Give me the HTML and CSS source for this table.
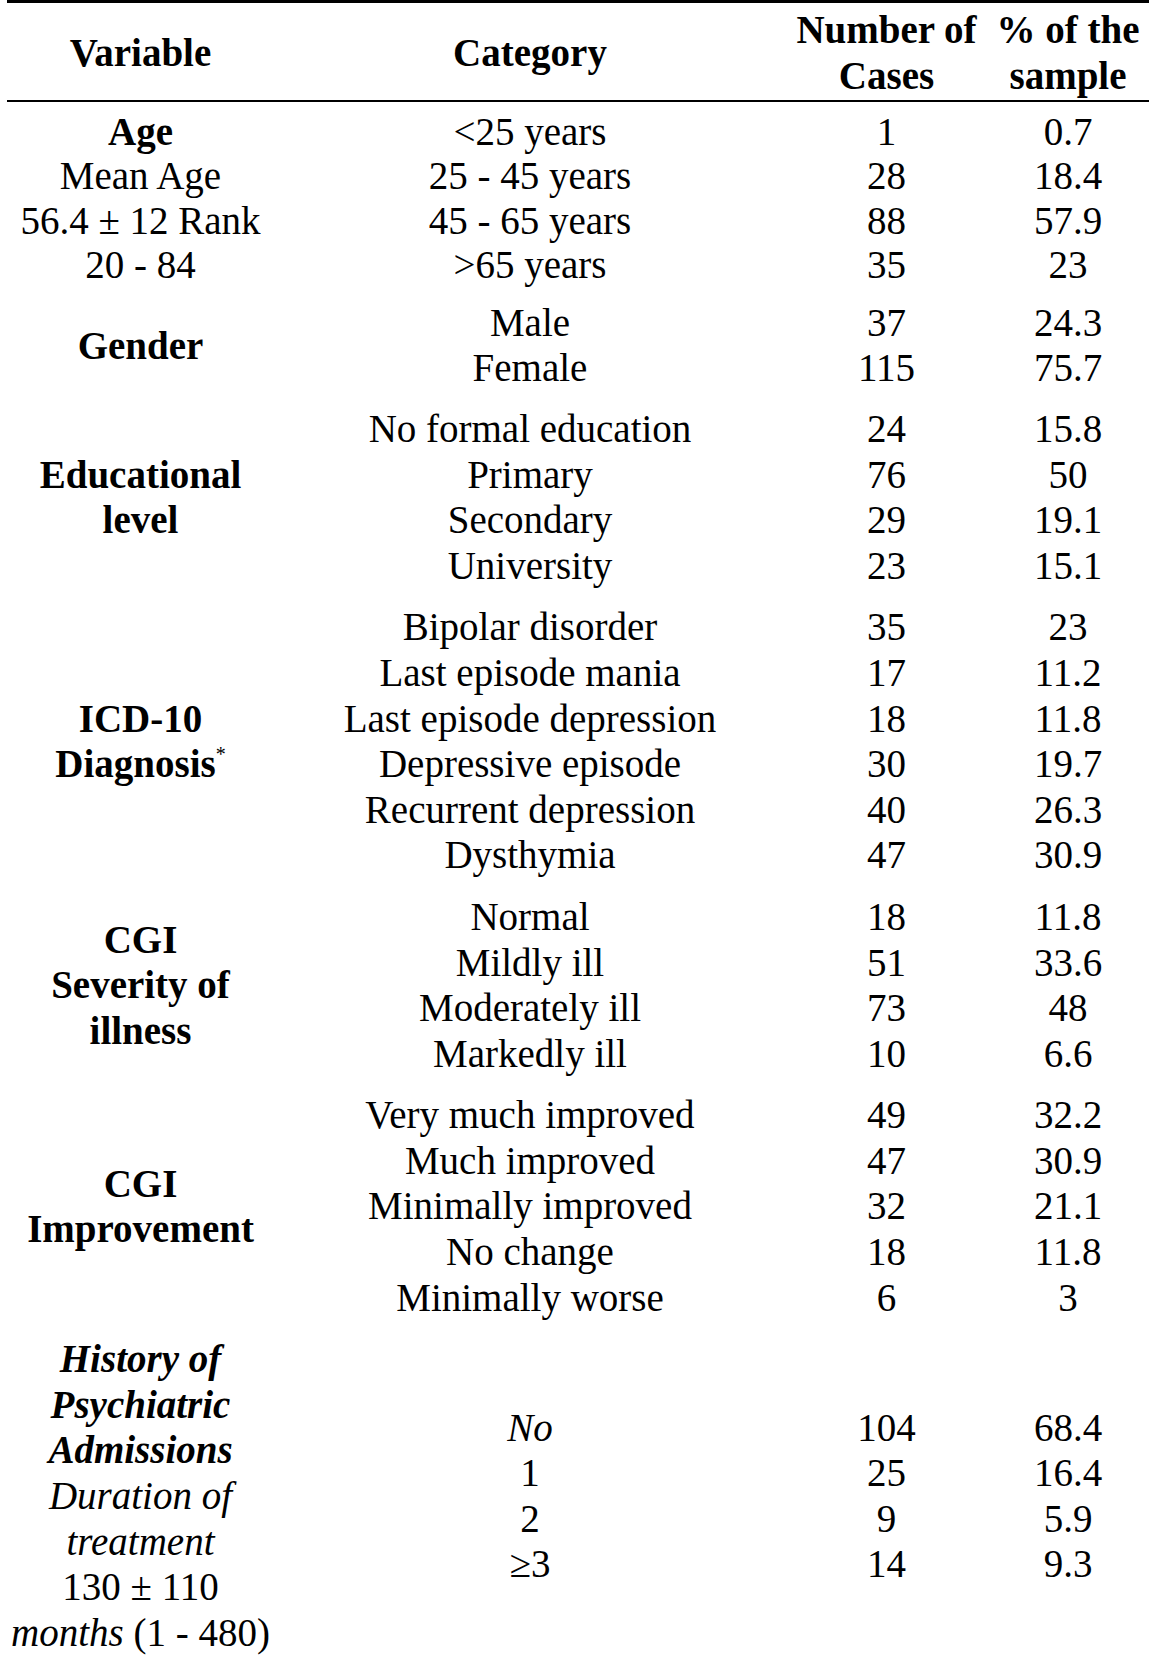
FILE: index.html
```html
<!DOCTYPE html>
<html lang="en">
<head>
<meta charset="utf-8">
<title>Sample characteristics</title>
<link rel="stylesheet" href="styles.css">
</head>
<body>
<table class="data">
  <colgroup>
    <col class="c-var">
    <col class="c-cat">
    <col class="c-num">
    <col class="c-pct">
  </colgroup>
  <thead>
    <tr>
      <th>Variable</th>
      <th>Category</th>
      <th>Number of<br>Cases</th>
      <th>% of the<br>sample</th>
    </tr>
  </thead>
  <tbody>
    <tr class="grp tight first">
      <td><b>Age</b><br>Mean Age<br>56.4 ± 12 Rank<br>20 - 84</td>
      <td>&lt;25 years<br>25 - 45 years<br>45 - 65 years<br>&gt;65 years</td>
      <td>1<br>28<br>88<br>35</td>
      <td>0.7<br>18.4<br>57.9<br>23</td>
    </tr>
    <tr class="grp tight">
      <td><b>Gender</b></td>
      <td>Male<br>Female</td>
      <td>37<br>115</td>
      <td>24.3<br>75.7</td>
    </tr>
    <tr class="grp">
      <td><b>Educational<br>level</b></td>
      <td>No formal education<br>Primary<br>Secondary<br>University</td>
      <td>24<br>76<br>29<br>23</td>
      <td>15.8<br>50<br>19.1<br>15.1</td>
    </tr>
    <tr class="grp">
      <td><b>ICD-10<br>Diagnosis<sup class="star">*</sup></b></td>
      <td>Bipolar disorder<br>Last episode mania<br>Last episode depression<br>Depressive episode<br>Recurrent depression<br>Dysthymia</td>
      <td>35<br>17<br>18<br>30<br>40<br>47</td>
      <td>23<br>11.2<br>11.8<br>19.7<br>26.3<br>30.9</td>
    </tr>
    <tr class="grp">
      <td><b>CGI<br>Severity of<br>illness</b></td>
      <td>Normal<br>Mildly ill<br>Moderately ill<br>Markedly ill</td>
      <td>18<br>51<br>73<br>10</td>
      <td>11.8<br>33.6<br>48<br>6.6</td>
    </tr>
    <tr class="grp">
      <td><b>CGI<br>Improvement</b></td>
      <td>Very much improved<br>Much improved<br>Minimally improved<br>No change<br>Minimally worse</td>
      <td>49<br>47<br>32<br>18<br>6</td>
      <td>32.2<br>30.9<br>21.1<br>11.8<br>3</td>
    </tr>
    <tr class="grp last">
      <td><b><i>History of<br>Psychiatric<br>Admissions</i></b><br><i>Duration of<br>treatment</i><br>130 ± 110<br><i>months</i> (1 - 480)</td>
      <td><i>No</i><br>1<br>2<br>≥3</td>
      <td>104<br>25<br>9<br>14</td>
      <td>68.4<br>16.4<br>5.9<br>9.3</td>
    </tr>
  </tbody>
</table>
</body>
</html>
```

FILE: styles.css
```css
html, body {
  margin: 0;
  padding: 0;
  background: #ffffff;
}

body {
  font-family: "Liberation Serif", "Times New Roman", serif;
  font-size: 39px;
  line-height: 45.6px;
  color: #000000;
}

.data {
  margin-left: 7px;
  width: 1142px;
  table-layout: fixed;
  border-collapse: collapse;
  border-top: 3px solid #000000;
}

.c-var { width: 267px; }
.c-cat { width: 512px; }
.c-num { width: 201px; }
.c-pct { width: 162px; }

.data th,
.data td {
  padding: 0;
  text-align: center;
  vertical-align: middle;
  white-space: nowrap;
}

.data thead th {
  font-weight: bold;
  padding-top: 4px;
  padding-bottom: 2px;
  border-bottom: 2px solid #000000;
}

.grp td {
  padding-top: 8px;
  padding-bottom: 8px;
}

.grp.first td {
  padding-top: 8px;
  padding-bottom: 6px;
}

.grp.tight td {
  line-height: 44.3px;
}

.grp.last td {
  padding-bottom: 0;
}

.star {
  font-size: 20px;
  line-height: 0;
  vertical-align: 16px;
  font-weight: normal;
}
```
